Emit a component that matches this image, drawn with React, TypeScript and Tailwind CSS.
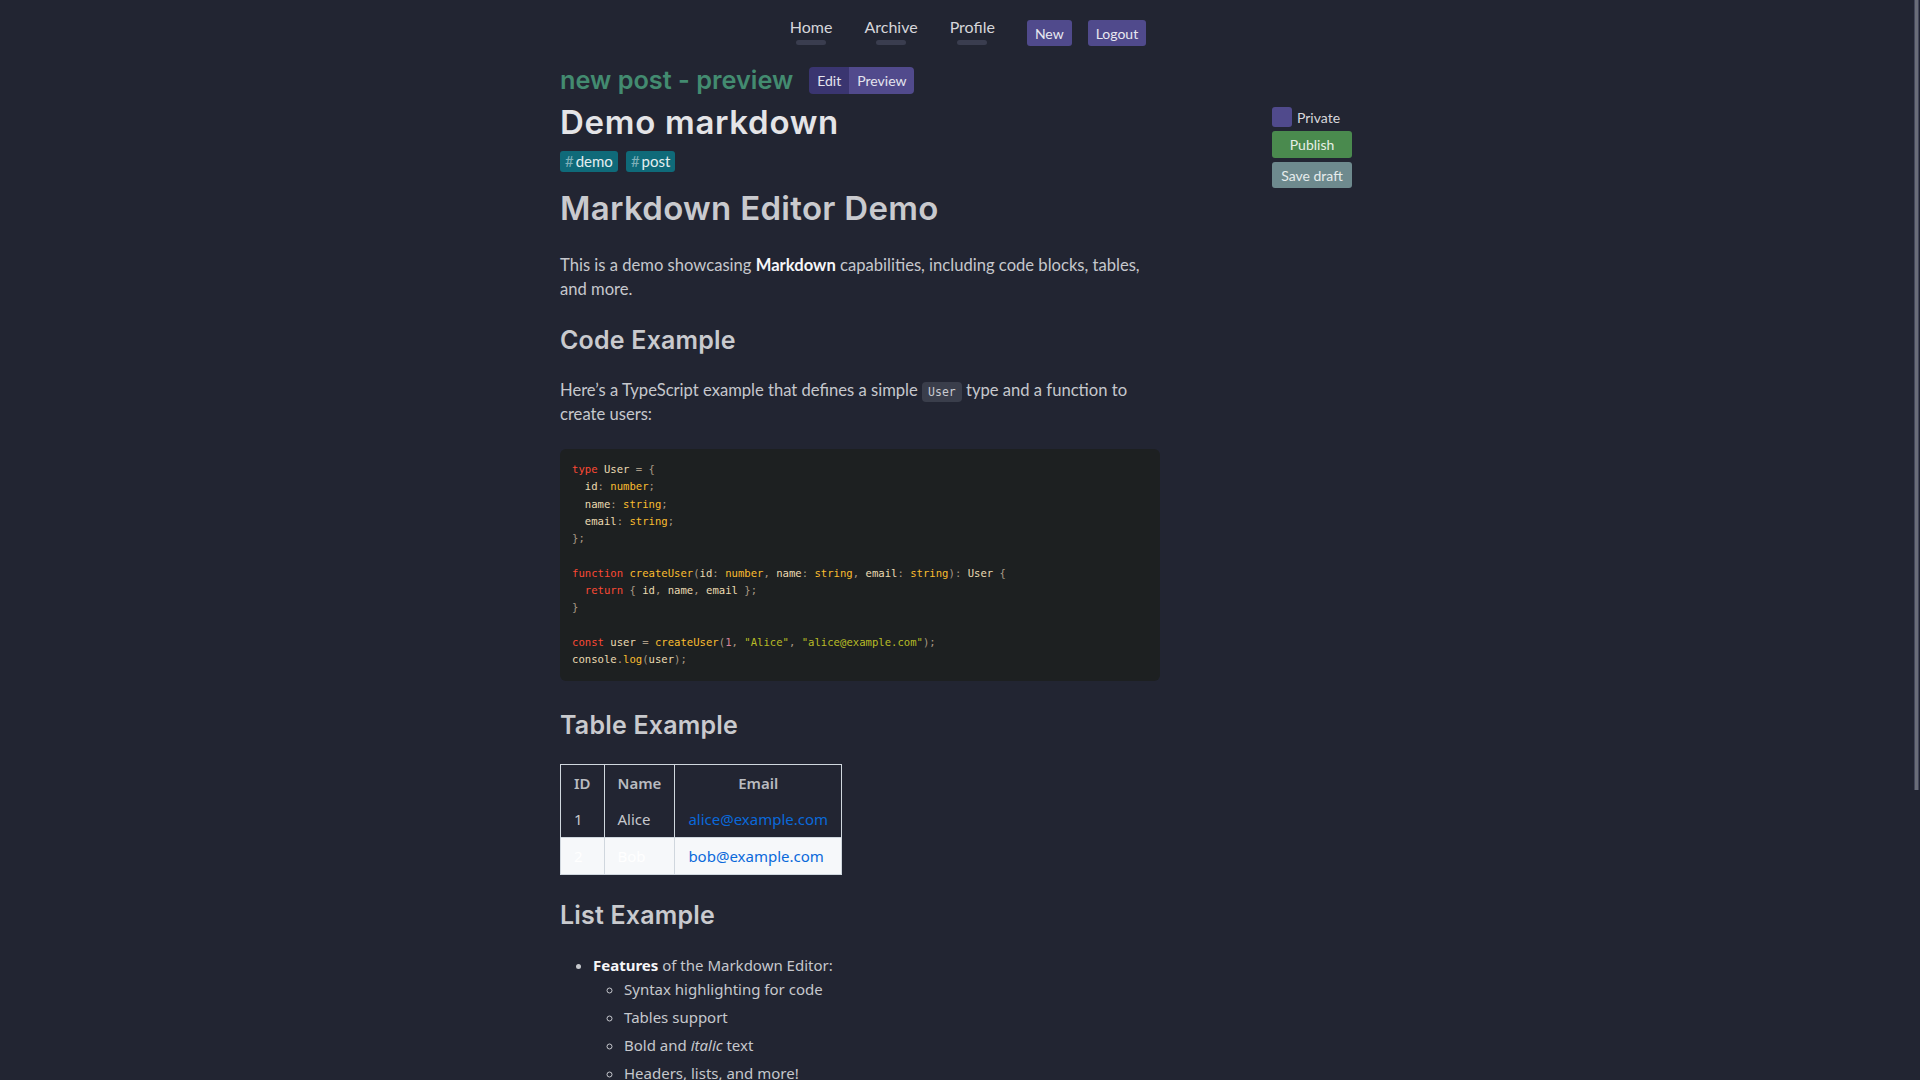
import React from "react";

type Tok = [string, string?];

const FG = "#ebdbb2";
const KW = "#fb4934";
const YE = "#fabd2f";
const PU = "#a89984";
const ST = "#b8bb26";
const NU = "#d3869b";

const codeLines: Tok[][] = [
  [["type", KW], [" User "], ["=", PU], [" "], ["{", PU]],
  [["  id"], [":", PU], [" "], ["number", YE], [";", PU]],
  [["  name"], [":", PU], [" "], ["string", YE], [";", PU]],
  [["  email"], [":", PU], [" "], ["string", YE], [";", PU]],
  [["};", PU]],
  [],
  [
    ["function", KW], [" "], ["createUser", YE], ["(", PU], ["id"], [":", PU], [" "], ["number", YE], [",", PU],
    [" name"], [":", PU], [" "], ["string", YE], [",", PU], [" email"], [":", PU], [" "], ["string", YE],
    [")", PU], [":", PU], [" User "], ["{", PU],
  ],
  [["  "], ["return", KW], [" "], ["{", PU], [" id"], [",", PU], [" name"], [",", PU], [" email "], ["};", PU]],
  [["}", PU]],
  [],
  [
    ["const", KW], [" user "], ["=", PU], [" "], ["createUser", YE], ["(", PU], ["1", NU], [",", PU], [" "],
    ['"Alice"', ST], [",", PU], [" "], ['"alice@example.com"', ST], [");", PU],
  ],
  [["console"], [".", PU], ["log", YE], ["(", PU], ["user"], [");", PU]],
];

const colorClass: Record<string, string> = {
  [FG]: "text-[#ebdbb2]",
  [KW]: "text-[#fb4934]",
  [YE]: "text-[#fabd2f]",
  [PU]: "text-[#a89984]",
  [ST]: "text-[#b8bb26]",
  [NU]: "text-[#d3869b]",
};

function NavItem({ label }: { label: string }) {
  return (
    <a className="flex flex-col items-center px-4 cursor-pointer">
      <span className="text-[16px] leading-[24px] text-[#d5d6da]">{label}</span>
      <span className="mt-[1px] h-[5px] w-[30px] rounded-full bg-[#3a3d4f]" />
    </a>
  );
}

function Tag({ name }: { name: string }) {
  return (
    <span className="flex h-[21px] items-center rounded-[3px] bg-[#0f6a79] px-[5px] text-[15px] text-[#e3eef0]">
      <span className="mr-[2px] text-[#7fb1b9]">#</span>
      {name}
    </span>
  );
}

export default function App() {
  const heading = "font-['Inter',sans-serif] font-semibold";
  return (
    <div className="relative h-screen overflow-hidden bg-[#222532] font-['Lato',sans-serif] text-[#c6c8cd]">
      <nav className="flex h-[46px] items-start justify-center pt-[15px]">
        <NavItem label="Home" />
        <NavItem label="Archive" />
        <NavItem label="Profile" />
        <button className="ml-4 mt-[5px] h-[26px] rounded-[3px] bg-[#504a8c] px-2 text-[14px] text-[#e8e8f0]">
          New
        </button>
        <button className="ml-4 mt-[5px] h-[26px] rounded-[3px] bg-[#504a8c] px-2 text-[14px] text-[#e8e8f0]">
          Logout
        </button>
      </nav>

      <div className="mx-auto flex w-[800px] pt-[16px]">
        <main className="w-[600px] shrink-0">
          <div className="flex h-[36px] items-center">
            <h2 className={`${heading} text-[25.3px] leading-[36px] text-[#438b70]`}>new post - preview</h2>
            <div className="ml-[16px] flex h-[27px] overflow-hidden rounded-[4px] text-[14px] text-[#e4e4ee]">
              <span className="flex items-center bg-[#3a3570] px-[8px]">Edit</span>
              <span className="flex items-center bg-[#514a8c] px-[8px]">Preview</span>
            </div>
          </div>

          <h1 className={`${heading} mt-[4px] text-[33px] leading-[40px] tracking-[0.7px] text-[#e4e4e7]`}>
            Demo markdown
          </h1>

          <div className="mt-[9px] flex gap-2">
            <Tag name="demo" />
            <Tag name="post" />
          </div>

          <h1 className={`${heading} mt-[16px] text-[33px] leading-[40px] tracking-[0.3px] text-[#c9cace]`}>
            Markdown Editor Demo
          </h1>

          <p className="mt-[25px] text-[16.6px] leading-[24px]">
            This is a demo showcasing <strong className="font-bold text-[#f6f6f8]">Markdown</strong> capabilities,
            including code blocks, tables, and more.
          </p>

          <h2 className={`${heading} mt-[23px] text-[25px] leading-[32px] tracking-[0.2px] text-[#c9cace]`}>
            Code Example
          </h2>

          <p className="mt-[22px] text-[16.6px] leading-[24px]">
            Here’s a TypeScript example that defines a simple{" "}
            <code className="rounded-[4px] bg-[#3a3e4b] px-[6px] py-[3px] font-['DejaVu_Sans_Mono',monospace] text-[11.5px] leading-none text-[#c9cad0]">
              User
            </code>{" "}
            type and a function to create users:
          </p>

          <div className="mt-[23px] rounded-[6px] bg-[#1d2021] p-3 font-['DejaVu_Sans_Mono',monospace] text-[10.6px] leading-[17.3px] text-[#ebdbb2]">
            {codeLines.map((line, i) => (
              <div key={i} className="h-[17.3px] whitespace-pre">
                {line.map(([t, c], j) => (
                  <span key={j} className={colorClass[c ?? FG]}>
                    {t}
                  </span>
                ))}
              </div>
            ))}
          </div>

          <h2 className={`${heading} mt-[28px] text-[25px] leading-[32px] tracking-[0.2px] text-[#c9cace]`}>
            Table Example
          </h2>

          <table className="mt-[23px] border-collapse border border-[#d0d7de] font-['Noto_Sans',sans-serif] text-[15px] leading-[24px]">
            <thead>
              <tr>
                <th className="border-x border-[#d0d7de] px-[13px] py-[6px] font-semibold text-[#b9bbc0]">ID</th>
                <th className="border-x border-[#d0d7de] px-[13px] py-[6px] font-semibold text-[#b9bbc0]">Name</th>
                <th className="border-x border-[#d0d7de] px-[13px] py-[6px] font-semibold text-[#b9bbc0]">Email</th>
              </tr>
            </thead>
            <tbody>
              <tr>
                <td className="border-x border-[#d0d7de] px-[13px] py-[6px] text-[#c6c8cd]">1</td>
                <td className="border-x border-[#d0d7de] px-[13px] py-[6px] text-[#c6c8cd]">Alice</td>
                <td className="border-x border-[#d0d7de] px-[13px] py-[6px] text-[#0a69da]">alice@example.com</td>
              </tr>
              <tr className="border-t border-[#d0d7de] bg-[#f6f8fa]">
                <td className="border-x border-[#d0d7de] px-[13px] py-[6px] text-white">2</td>
                <td className="border-x border-[#d0d7de] px-[13px] py-[6px] text-white">Bob</td>
                <td className="border-x border-[#d0d7de] px-[13px] py-[6px] text-[#0a69da]">bob@example.com</td>
              </tr>
            </tbody>
          </table>

          <h2 className={`${heading} mt-[24px] text-[25px] leading-[32px] tracking-[0.2px] text-[#c9cace]`}>
            List Example
          </h2>

          <ul className="mt-[22px] list-disc pl-[33px] font-['Noto_Sans',sans-serif] text-[15px] leading-[24px] text-[#c6c8cd]">
            <li>
              <strong className="font-bold text-[#f6f6f8]">Features</strong> of the Markdown Editor:
              <ul className="list-[circle] pl-[31px]">
                <li>Syntax highlighting for code</li>
                <li className="mt-1">Tables support</li>
                <li className="mt-1">
                  Bold and <em>italic</em> text
                </li>
                <li className="mt-1">Headers, lists, and more!</li>
              </ul>
            </li>
          </ul>
        </main>

        <aside className="ml-[112px] mt-[45px] w-[80px] shrink-0 text-[14px]">
          <label className="flex h-[20px] items-center">
            <span className="h-[20px] w-[20px] rounded-[3px] bg-[#504a8c]" />
            <span className="ml-[5px] text-[#d8d8dc]">Private</span>
          </label>
          <button className="mt-[4px] h-[27px] w-full rounded-[3px] bg-[#4a8a4e] text-[#e6efe6]">Publish</button>
          <button className="mt-[4px] h-[26px] w-full rounded-[3px] bg-[#6e8a8e] text-[#e6ecec]">Save draft</button>
        </aside>
      </div>

      <div className="absolute right-[1px] top-0 h-[790px] w-[5px] border-x border-[#44475a] bg-[#6a6d78]" />
    </div>
  );
}
